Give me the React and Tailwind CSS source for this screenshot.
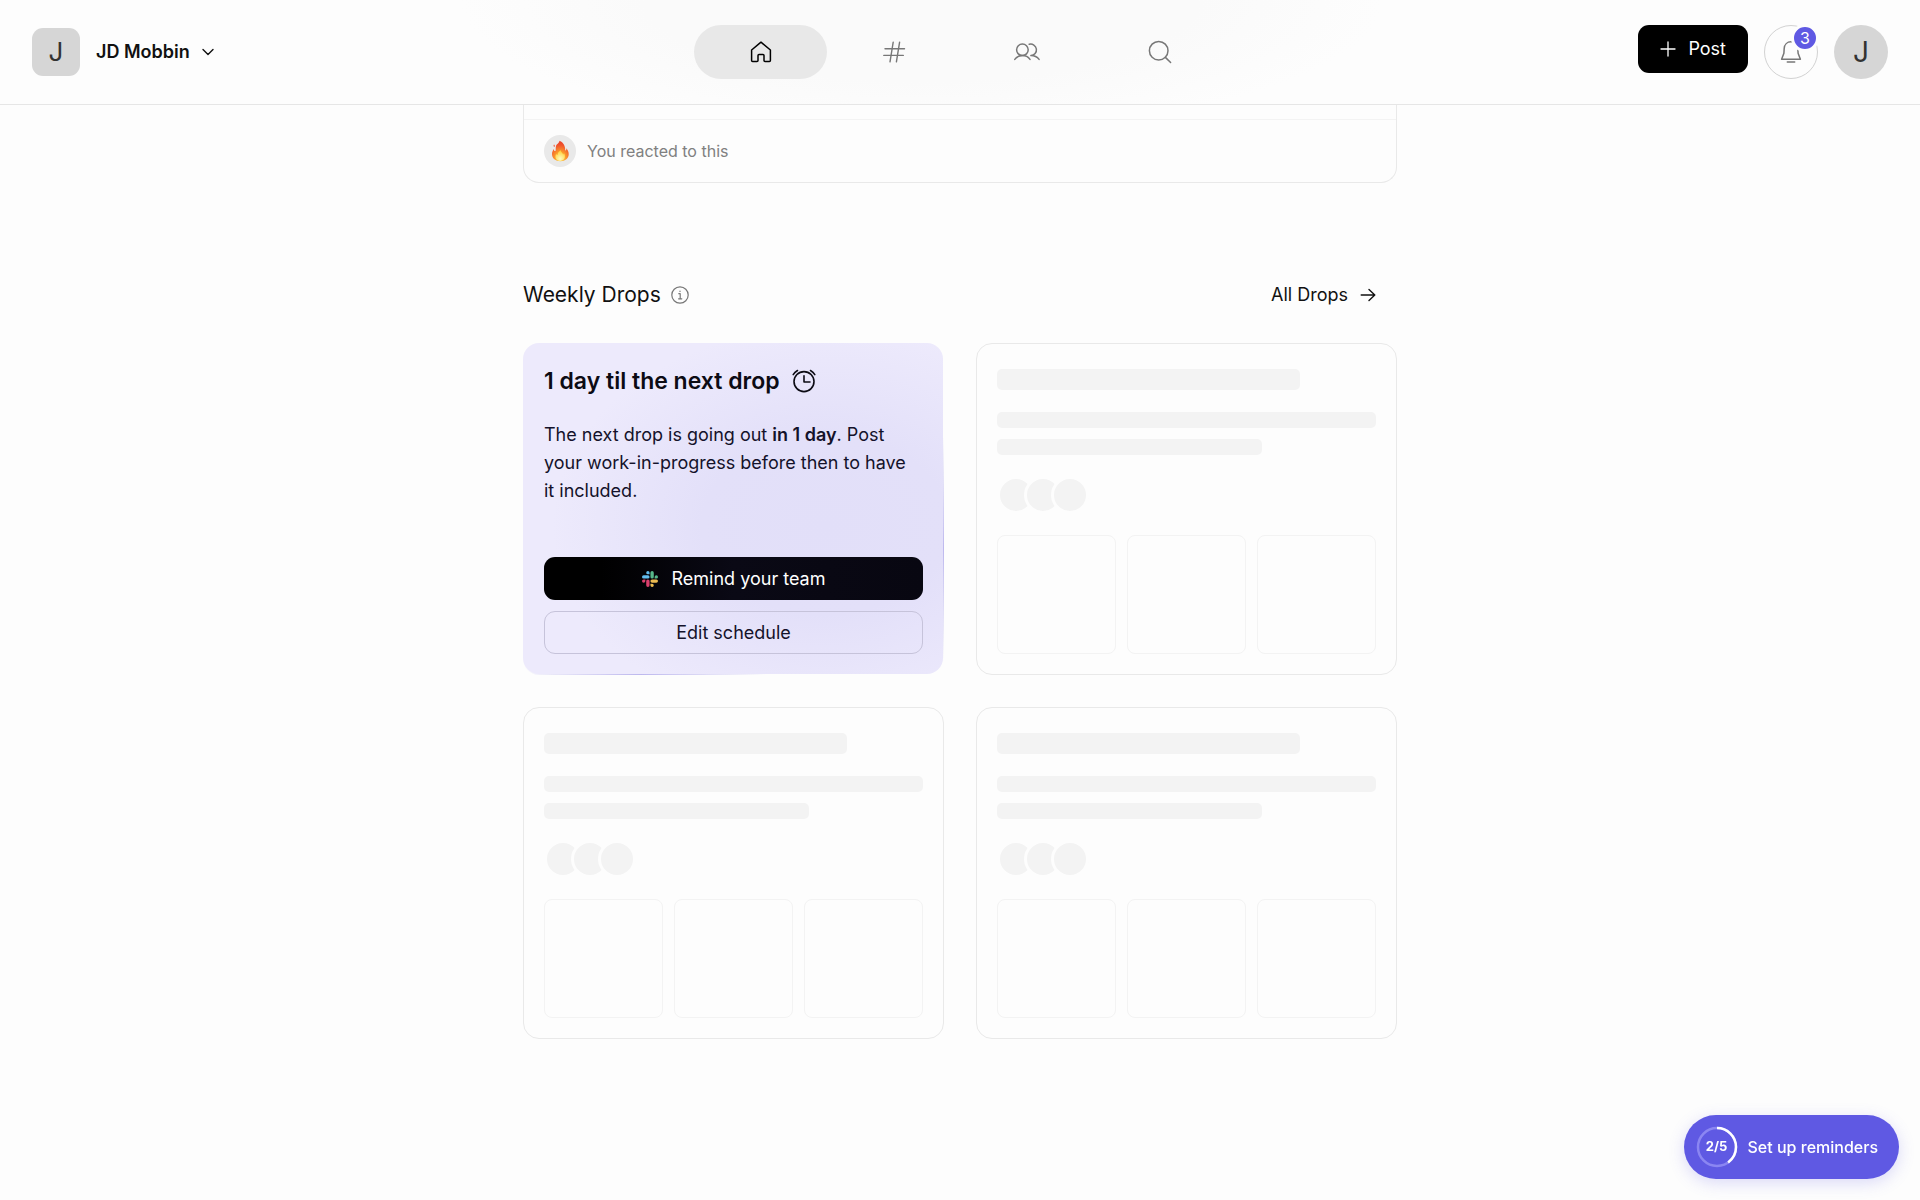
import React from "react";

function Stroke({ size = 24, width = 1.5, className = "", children }) {
  return (
    <svg
      width={size}
      height={size}
      viewBox={`0 0 ${size} ${size}`}
      fill="none"
      stroke="currentColor"
      strokeWidth={width}
      strokeLinecap="round"
      strokeLinejoin="round"
      aria-hidden="true"
      className={`shrink-0 ${className}`}
    >
      {children}
    </svg>
  );
}

const HomeIcon = () => (
  <Stroke>
    <path d="M12 2.2 21.4 10v10.4a1 1 0 0 1-1 1H16a1 1 0 0 1-1-1v-4.9a1 1 0 0 0-1-1h-4a1 1 0 0 0-1 1v4.9a1 1 0 0 1-1 1H3.6a1 1 0 0 1-1-1V10Z" />
  </Stroke>
);

const HashIcon = () => (
  <Stroke width={1.4}>
    <path d="M3 8.7h19.5M1.8 15.4h19.5M11.2 2.2 8 21.8M17.6 2.2l-3.2 19.6" />
  </Stroke>
);

const PeopleIcon = () => (
  <Stroke size={28} width={1.5}>
    <circle cx="9.4" cy="11.8" r="5.8" />
    <path d="M1.8 21.4c1.9-2.6 4.4-3.8 7.6-3.8s5.7 1.2 7.6 3.8" />
    <path d="M16.2 6.3a5.750 5.750 0 1 1 1.7 11.300c3.4 0 6.2 1.2 8.2 3.8" />
  </Stroke>
);

const SearchIcon = () => (
  <Stroke width={1.5}>
    <circle cx="10.7" cy="10.7" r="9.3" />
    <path d="m17.4 17.4 5.2 5.1" />
  </Stroke>
);

const BellIcon = () => (
  <Stroke width={1.5}>
    <path d="M12 1.8c-3.8 0-6.6 2.8-6.8 6.6L4.900 13.2 2.6 19.3h18.800l-2.3-6.1-.3-4.8C18.6 4.6 15.8 1.8 12 1.8ZM8.3 22.1h7.4" />
  </Stroke>
);

const ClockIcon = () => (
  <Stroke width={1.6}>
    <circle cx="12" cy="12.6" r="10" />
    <path d="M12 6.8V13h6M1.2 5.6C2.2 3.9 3.7 2.5 5.5 1.5M22.8 5.6c-1-1.7-2.5-3.1-4.3-4.1" />
  </Stroke>
);

const SlackIcon = () => (
  <svg width="16" height="16" viewBox="0 0 24 24" aria-hidden="true" className="shrink-0">
    <path fill="#d93f6c" d="M5.042 15.165a2.528 2.528 0 0 1-2.520 2.523A2.528 2.528 0 0 1 0 15.165a2.527 2.527 0 0 1 2.522-2.520h2.520zM6.313 15.165a2.527 2.527 0 0 1 2.521-2.520 2.527 2.527 0 0 1 2.521 2.520v6.313A2.528 2.528 0 0 1 8.834 24a2.528 2.528 0 0 1-2.521-2.522z" />
    <path fill="#62bdee" d="M8.834 5.042a2.528 2.528 0 0 1-2.521-2.520A2.528 2.528 0 0 1 8.834 0a2.528 2.528 0 0 1 2.521 2.522v2.520zM8.834 6.313a2.528 2.528 0 0 1 2.521 2.521 2.528 2.528 0 0 1-2.521 2.521H2.522A2.528 2.528 0 0 1 0 8.834a2.528 2.528 0 0 1 2.522-2.521z" />
    <path fill="#56b88a" d="M18.956 8.834a2.528 2.528 0 0 1 2.522-2.521A2.528 2.528 0 0 1 24 8.834a2.528 2.528 0 0 1-2.522 2.521h-2.522zM17.688 8.834a2.528 2.528 0 0 1-2.523 2.521 2.527 2.527 0 0 1-2.520-2.521V2.522A2.527 2.527 0 0 1 15.165 0a2.528 2.528 0 0 1 2.523 2.522z" />
    <path fill="#ebbb50" d="M15.165 18.956a2.528 2.528 0 0 1 2.523 2.522A2.528 2.528 0 0 1 15.165 24a2.527 2.527 0 0 1-2.520-2.522v-2.522zM15.165 17.688a2.527 2.527 0 0 1-2.520-2.523 2.526 2.526 0 0 1 2.520-2.520h6.313A2.527 2.527 0 0 1 24 15.165a2.528 2.528 0 0 1-2.522 2.523z" />
  </svg>
);

const FireIcon = () => (
  <svg width="22" height="22" viewBox="0 0 22 22" role="img" aria-label="Fire">
    <defs>
      <radialGradient id="flame" cx="0.5" cy="0.88" r="0.85">
        <stop offset="0" stopColor="#ffd64a" />
        <stop offset="0.4" stopColor="#fb9a2c" />
        <stop offset="0.8" stopColor="#f0512b" />
        <stop offset="1" stopColor="#e8432a" />
      </radialGradient>
      <radialGradient id="core" cx="0.5" cy="0.8" r="0.7">
        <stop offset="0" stopColor="#fffbc0" />
        <stop offset="1" stopColor="#ffd23c" />
      </radialGradient>
    </defs>
    <path
      fill="url(#flame)"
      d="M10.4.7c2.7 1 5.4 3.8 5.7 7.6.1 1.2-.1 2.2.4 2.3.7.1 1-1 .7-2.3 1.6 1.5 2.5 3.8 2.5 6 0 4.1-3.5 7-8.2 7-5 0-8.5-2.9-8.5-7.2 0-2.3 1-3.8 1.8-5.2.1 1.2.5 2.2 1.2 2.2 1.3 0 .3-2.9 1.1-5.4C7.7 3.9 10.5 3 10.4.7Z"
    />
    <path fill="#f0512b" d="M5 4.4c.9.7 1.1 1.7.3 2.6-.8-.6-1-1.6-.3-2.6Z" />
    <path
      fill="url(#core)"
      d="M11.8 10.2c-.2 2.1 2.1 2.6 2.3 4.3.6-.2.8-.9.8-1.5 2.3 3.5.8 7.6-3.5 7.9-4.6 0-6-3.9-4.2-7.2.2.8.7 1.2 1.3 1.2.2-2.1 1.2-3.6 3.3-4.7Z"
    />
  </svg>
);

const tabs = [
  { label: "Home", Icon: HomeIcon, active: true },
  { label: "Channels", Icon: HashIcon },
  { label: "People", Icon: PeopleIcon },
  { label: "Search", Icon: SearchIcon },
];

function Header() {
  return (
    <header className="grid grid-cols-[1fr_auto_1fr] items-start border-b border-[#e6e6e6] bg-[radial-gradient(ellipse_24%_130%_at_48%_0%,#fafafa_60%,#fdfdfd_100%)] px-8 py-[25px]">
      <button type="button" className="flex h-[54px] items-center justify-self-start text-lg font-semibold text-[#111]">
        <span className="flex size-12 items-center justify-center rounded-[11px] bg-[#d6d6d6] text-[26px] font-normal text-[#333]">
          J
        </span>
        <span className="ml-4">JD Mobbin</span>
        <Stroke size={12} width={1.4} className="ml-3">
          <path d="m1 3.5 5 5 5-5" />
        </Stroke>
      </button>

      <nav aria-label="Main" className="flex">
        {tabs.map(({ label, Icon, active }) => (
          <a
            key={label}
            href="#"
            aria-label={label}
            className={
              active
                ? "flex h-[54px] w-[133px] items-center justify-center rounded-full bg-[#e8e8e8] text-black"
                : "flex h-[54px] w-[133px] items-center justify-center rounded-full text-[#777]"
            }
          >
            <Icon />
          </a>
        ))}
      </nav>

      <div className="flex items-start gap-4 justify-self-end">
        <button type="button" className="flex h-12 items-center gap-3 rounded-[11px] bg-black px-[22px] text-lg text-white">
          <Stroke size={16} width={1.3}>
            <path d="M8 1v14M1 8h14" />
          </Stroke>
          Post
        </button>
        <button
          type="button"
          aria-label="Notifications, 3 new"
          className="relative flex size-[54px] items-center justify-center rounded-full border border-[#d2d2d2] text-[#777]"
        >
          <BellIcon />
          <span className="absolute -top-[2px] -right-[2px] flex size-7 items-center justify-center rounded-full border-3 border-[#fdfdfd] bg-[#5f59e3] text-base leading-none text-white">
            3
          </span>
        </button>
        <button
          type="button"
          aria-label="Your account"
          className="flex size-[54px] items-center justify-center rounded-full bg-[#d6d6d6] text-[28px] text-[#333]"
        >
          J
        </button>
      </div>
    </header>
  );
}

function PlaceholderCard() {
  return (
    <div className="flex flex-col rounded-2xl border border-[#e9e9e9] px-5 pt-[25px] pb-5">
      <div className="h-[21px] w-4/5 rounded-[5px] bg-[#f3f3f3]" />
      <div className="mt-[22px] h-4 w-full rounded-[5px] bg-[#f3f3f3]" />
      <div className="mt-[11px] h-4 w-7/10 rounded-[5px] bg-[#f3f3f3]" />
      <div className="mt-[21px] flex -space-x-[11px]">
        <div className="size-[38px] rounded-full border-3 border-[#fdfdfd] bg-[#f3f3f3]" />
        <div className="size-[38px] rounded-full border-3 border-[#fdfdfd] bg-[#f3f3f3]" />
        <div className="size-[38px] rounded-full border-3 border-[#fdfdfd] bg-[#f3f3f3]" />
      </div>
      <div className="mt-[21px] grid grid-cols-3 gap-[11px]">
        <div className="aspect-square rounded-lg border border-[#f3f3f3]" />
        <div className="aspect-square rounded-lg border border-[#f3f3f3]" />
        <div className="aspect-square rounded-lg border border-[#f3f3f3]" />
      </div>
    </div>
  );
}

function NextDropCard() {
  return (
    <article className="grid rounded-2xl bg-[radial-gradient(ellipse_30%_12%_at_28%_100%,#bdb8ee,transparent),radial-gradient(ellipse_12%_34%_at_100%_62%,#bdb8ee,transparent)] pr-px pb-px text-[#14122a]">
      <div className="flex flex-col rounded-2xl bg-[radial-gradient(ellipse_65%_60%_at_72%_55%,#e2dff9_0%,#e3e0f9_45%,#edeafc_100%)] py-5 pr-5 pl-[21px]">
        <h3 className="flex items-center gap-3 text-[23px] leading-9 font-semibold text-[#0c0b14]">
          1 day til the next drop
          <ClockIcon />
        </h3>
        <p className="mt-[22px] pr-2 text-lg leading-7">
          The next drop is going out <strong className="font-semibold">in 1 day</strong>. Post your work-in-progress
          before then to have it included.
        </p>
        <div className="mt-auto flex flex-col gap-[11px]">
          <button
            type="button"
            className="flex h-[43px] items-center justify-center gap-[14px] rounded-[11px] bg-[linear-gradient(90deg,#000_15%,#0a0915_50%,#080711_100%)] text-lg text-white"
          >
            <SlackIcon />
            Remind your team
          </button>
          <button type="button" className="h-[43px] rounded-[11px] border border-[#c6c3da] text-lg">
            Edit schedule
          </button>
        </div>
      </div>
    </article>
  );
}

export default function App() {
  return (
    <div className="min-h-screen bg-[#fdfdfd] font-['Inter',sans-serif] text-[#111]">
      <Header />

      <main className="mx-auto w-full max-w-[874px]">
        <section className="rounded-b-2xl border-x border-b border-[#e9e9e9] pt-3.5">
          <div className="flex items-center gap-[11px] border-t border-[#f3f3f3] px-5 py-[15px] text-base text-[#808080]">
            <span className="flex size-8 items-center justify-center rounded-full bg-[#e9e9e9]">
              <FireIcon />
            </span>
            You reacted to this
          </div>
        </section>

        <section className="pt-[96px]">
          <div className="flex h-8 items-center justify-between pr-[21px]">
            <div className="flex items-center gap-2.5">
              <h2 className="text-[21px]">Weekly Drops</h2>
              <button type="button" aria-label="About weekly drops" className="text-[#777]">
                <Stroke size={18} width={1.2}>
                  <circle cx="9" cy="9" r="8.2" />
                  <path d="M7.8 7.7h1.4v5M7.6 12.8h3.2M9 5.1v.4" />
                </Stroke>
              </button>
            </div>
            <a href="#" className="flex items-center gap-3 text-lg">
              All Drops
              <Stroke size={16} width={1.4}>
                <path d="M1.2 8h13.6M9 2.6 14.8 8 9 13.4" />
              </Stroke>
            </a>
          </div>

          <div className="mt-8 grid grid-cols-2 gap-8">
            <NextDropCard />
            <PlaceholderCard />
            <PlaceholderCard />
            <PlaceholderCard />
          </div>
        </section>
      </main>

      <button
        type="button"
        className="fixed right-[21px] bottom-[21px] flex h-16 items-center gap-2.5 rounded-full bg-[#5f59e3] pr-[21px] pl-3 text-base font-medium text-white shadow-[0_4px_16px_rgba(95,89,227,0.22)]"
      >
        <span className="grid size-[42px] place-items-center">
          <svg viewBox="0 0 42 42" className="col-start-1 row-start-1 size-full -rotate-90" fill="none" aria-hidden="true">
            <circle cx="21" cy="21" r="19" stroke="#8b86f2" strokeWidth="2.5" />
            <circle cx="21" cy="21" r="19" stroke="#fff" strokeWidth="2.5" pathLength="100" strokeDasharray="40 100" />
          </svg>
          <span className="col-start-1 row-start-1 text-[13px] font-bold">2/5</span>
        </span>
        Set up reminders
      </button>
    </div>
  );
}
